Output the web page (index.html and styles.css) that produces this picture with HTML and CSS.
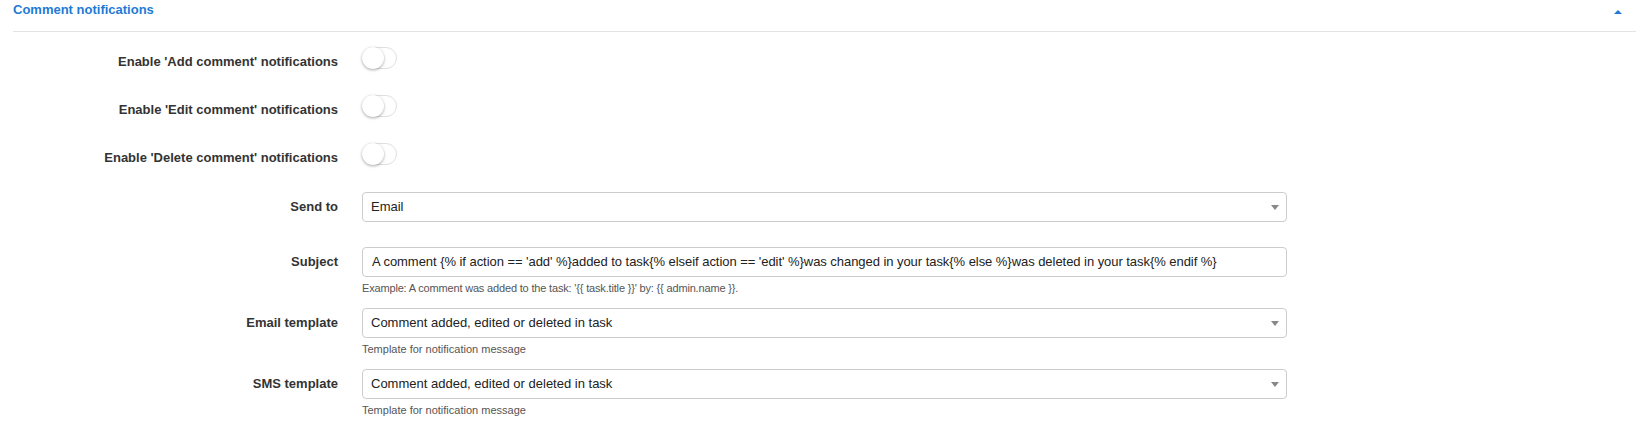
FILE: index.html
```html
<!DOCTYPE html>
<html>
<head>
<meta charset="utf-8">
<link rel="stylesheet" href="styles.css">
</head>
<body>
<div class="panel">
  <div class="panel-head">
    <span class="panel-title">Comment notifications</span>
    <span class="collapse-caret"></span>
  </div>
  <div class="form">
    <div class="row row-toggle">
      <label class="lbl">Enable 'Add comment' notifications</label>
      <div class="ctl"><span class="switch"><span class="knob"></span></span></div>
    </div>
    <div class="row row-toggle">
      <label class="lbl">Enable 'Edit comment' notifications</label>
      <div class="ctl"><span class="switch"><span class="knob"></span></span></div>
    </div>
    <div class="row row-toggle row-last-toggle">
      <label class="lbl">Enable 'Delete comment' notifications</label>
      <div class="ctl"><span class="switch"><span class="knob"></span></span></div>
    </div>
    <div class="row row-send">
      <label class="lbl">Send to</label>
      <div class="ctl"><div class="field select">Email<span class="arrow"></span></div></div>
    </div>
    <div class="row">
      <label class="lbl">Subject</label>
      <div class="ctl">
        <div class="field input">A comment {% if action == 'add' %}added to task{% elseif action == 'edit' %}was changed in your task{% else %}was deleted in your task{% endif %}</div>
        <div class="help help-example">Example: A comment was added to the task: '{{ task.title }}' by: {{ admin.name }}.</div>
      </div>
    </div>
    <div class="row">
      <label class="lbl">Email template</label>
      <div class="ctl">
        <div class="field select">Comment added, edited or deleted in task<span class="arrow"></span></div>
        <div class="help">Template for notification message</div>
      </div>
    </div>
    <div class="row">
      <label class="lbl">SMS template</label>
      <div class="ctl">
        <div class="field select">Comment added, edited or deleted in task<span class="arrow"></span></div>
        <div class="help">Template for notification message</div>
      </div>
    </div>
  </div>
</div>
</body>
</html>
```
FILE: styles.css
```css
html, body {
  margin: 0;
  padding: 0;
  background: #fff;
}
body {
  font-family: "Liberation Sans", Arial, sans-serif;
  color: #333;
}
.panel {
  padding: 0 6px 0 13px;
}
.panel-head {
  height: 31px;
  border-bottom: 1px solid #e3e3e3;
  display: flex;
  justify-content: space-between;
  align-items: flex-start;
}
.panel-title {
  font-size: 13px;
  font-weight: bold;
  line-height: 20px;
  color: #1f7ad5;
}
.collapse-caret {
  width: 0;
  height: 0;
  margin-top: 10px;
  margin-right: 14px;
  border-left: 4px solid transparent;
  border-right: 4px solid transparent;
  border-bottom: 4px solid #1f7ad5;
}
.form {
  padding-top: 15px;
}
.row {
  display: grid;
  grid-template-columns: 325px 925px;
  column-gap: 24px;
  margin-bottom: 13px;
}
.lbl {
  font-size: 13px;
  font-weight: bold;
  color: #333;
  text-align: right;
  line-height: 30px;
  height: 30px;
  white-space: nowrap;
}
.row-toggle {
  margin-bottom: 18px;
}
.row-last-toggle {
  margin-bottom: 19px;
}
.row-send {
  margin-bottom: 25px;
}
.switch {
  display: block;
  position: relative;
  width: 33px;
  height: 20px;
  border: 1px solid #dfdfdf;
  border-radius: 11px;
  background: #fff;
  box-sizing: content-box;
}
.knob {
  position: absolute;
  left: -1px;
  top: -1px;
  width: 22px;
  height: 22px;
  border-radius: 50%;
  background: #fff;
  box-shadow: 0 1px 3px rgba(0, 0, 0, 0.35);
}
.field {
  position: relative;
  height: 30px;
  box-sizing: border-box;
  border: 1px solid #ccc;
  border-radius: 4px;
  padding: 0 8px;
  font-size: 13px;
  line-height: 28px;
  color: #222;
  white-space: nowrap;
  overflow: hidden;
}
.input {
  padding-left: 9px;
  letter-spacing: -0.05px;
}
.arrow {
  position: absolute;
  right: 7px;
  top: 12px;
  width: 0;
  height: 0;
  border-left: 4px solid transparent;
  border-right: 4px solid transparent;
  border-top: 5px solid #888;
}
.help {
  margin-top: 4px;
  font-size: 11px;
  line-height: 14px;
  color: #555;
}
.help-example {
  letter-spacing: -0.17px;
}
```
